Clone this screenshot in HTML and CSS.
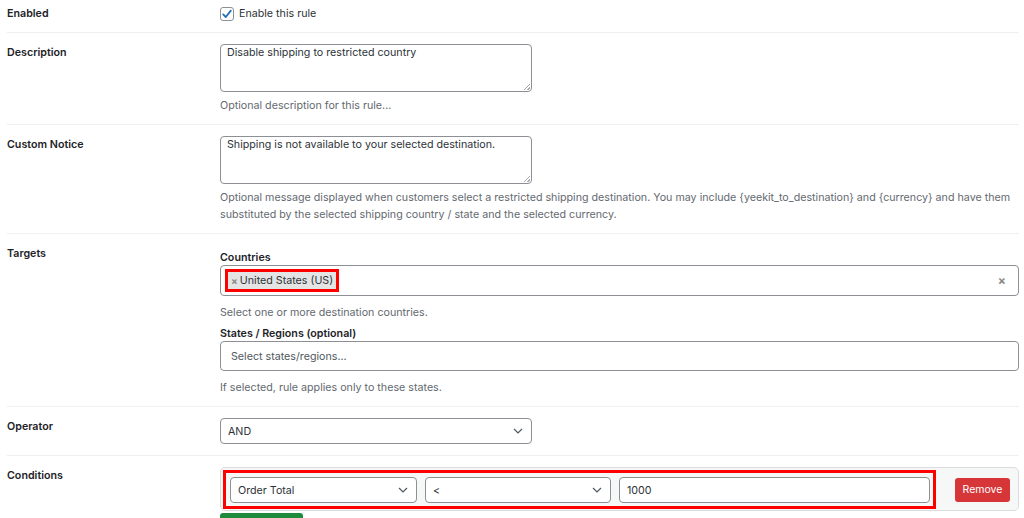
FILE: index.html
```html
<!doctype html>
<html>
	<head>
		<meta charset="utf-8">
		<link rel="stylesheet" href="styles.css">
	</head>
	<body>
		<div class="rule-form">

			<div class="rule-row rule-row-first">
				<div class="rule-label">Enabled</div>
				<div class="rule-field">
					<label class="check">
						<span class="check-box">
							<svg width="12" height="12" viewBox="0 0 12 12"><path d="M2.2 6.4 L4.8 9 L9.8 2.6" fill="none" stroke="#2271b1" stroke-width="1.8" stroke-linecap="round" stroke-linejoin="round"/></svg>
						</span>
						Enable this rule
					</label>
				</div>
			</div>

			<div class="rule-row">
				<div class="rule-label">Description</div>
				<div class="rule-field">
					<div class="textarea">Disable shipping to restricted country<span class="grip"></span></div>
					<p class="help">Optional description for this rule...</p>
				</div>
			</div>

			<div class="rule-row">
				<div class="rule-label">Custom Notice</div>
				<div class="rule-field">
					<div class="textarea">Shipping is not available to your selected destination.<span class="grip"></span></div>
					<p class="help">Optional message displayed when customers select a restricted shipping destination. You may include {yeekit_to_destination} and {currency} and have them<br>substituted by the selected shipping country / state and the selected currency.</p>
				</div>
			</div>

			<div class="rule-row">
				<div class="rule-label">Targets</div>
				<div class="rule-field rule-field-targets">
					<div class="sub-label">Countries</div>
					<div class="multi-select">
						<span class="mark mark-tag">
							<span class="tag"><span class="tag-x">×</span>United States (US)</span>
						</span>
						<span class="clear-x">×</span>
					</div>
					<p class="help help-after-select">Select one or more destination countries.</p>
					<div class="sub-label sub-label-states">States / Regions (optional)</div>
					<div class="multi-select multi-select-empty">Select states/regions...</div>
					<p class="help help-after-select">If selected, rule applies only to these states.</p>
				</div>
			</div>

			<div class="rule-row rule-row-select">
				<div class="rule-label">Operator</div>
				<div class="rule-field">
					<div class="select select-operator">AND
						<svg class="chevron" width="10" height="6" viewBox="0 0 10 6"><path d="M1 1 L5 5 L9 1" fill="none" stroke="#50575e" stroke-width="1.2"/></svg>
					</div>
				</div>
			</div>

			<div class="rule-row rule-row-last">
				<div class="rule-label">Conditions</div>
				<div class="rule-field">
					<div class="condition">
						<div class="mark mark-condition">
							<div class="select select-type">Order Total
								<svg class="chevron" width="10" height="6" viewBox="0 0 10 6"><path d="M1 1 L5 5 L9 1" fill="none" stroke="#50575e" stroke-width="1.2"/></svg>
							</div>
							<div class="select select-compare">&lt;
								<svg class="chevron" width="10" height="6" viewBox="0 0 10 6"><path d="M1 1 L5 5 L9 1" fill="none" stroke="#50575e" stroke-width="1.2"/></svg>
							</div>
							<div class="text-input">1000</div>
						</div>
						<button class="btn-remove">Remove</button>
					</div>
					<button class="btn-add">Add Condition</button>
				</div>
			</div>

		</div>
	</body>
</html>
```

FILE: styles.css
```css
body {
	margin: 0;
	background: #fff;
	font-family: "Inter", "Roboto", sans-serif;
	font-size: 10.7px;
	color: #2c3338;
	overflow: hidden;
}

.rule-form {
	padding: 0 5px 0 7px;
}

.rule-row {
	display: grid;
	grid-template-columns: 213px 1fr;
	padding: 11px 0 10px;
	border-bottom: 1px solid #f0f0f1;
}
.rule-row-first {
	padding: 5px 0 10px;
}
.rule-row-select {
	padding-bottom: 11px;
}
.rule-row-last {
	border-bottom: none;
}

.rule-label {
	font-weight: 600;
	line-height: 16px;
	padding-top: 1px;
	color: #1d2327;
}

.rule-field {
	min-width: 0;
}
.rule-field-targets {
	padding-top: 4px;
}

/* checkbox */
.check {
	display: flex;
	align-items: center;
	gap: 5px;
	line-height: 16px;
	padding-top: 1px;
	color: #2c3338;
}
.check-box {
	width: 12px;
	height: 12px;
	border: 1px solid #8c8f94;
	border-radius: 3px;
	display: flex;
	align-items: center;
	justify-content: center;
	background: #fff;
}

/* textareas */
.textarea {
	position: relative;
	width: 298px;
	height: 46px;
	border: 1px solid #8c8f94;
	border-radius: 4px;
	padding: 0 6px;
	line-height: 15px;
}
.grip {
	position: absolute;
	right: 1px;
	bottom: 1px;
	width: 6px;
	height: 6px;
	background: linear-gradient(135deg, transparent 45%, #a7aaad 45%, #a7aaad 55%, transparent 55%, transparent 75%, #a7aaad 75%, #a7aaad 85%, transparent 85%);
}

.help {
	margin: 5px 0 0;
	line-height: 17px;
	color: #646970;
	white-space: nowrap;
}
.help-after-select {
	margin-top: 8px;
}

.sub-label {
	font-weight: 600;
	line-height: 15px;
	padding-top: 1px;
	color: #1d2327;
}
.sub-label-states {
	margin-top: 4px;
}

/* select2-like boxes */
.multi-select {
	position: relative;
	height: 29px;
	border: 1px solid #8c8f94;
	border-radius: 4px;
	display: flex;
	align-items: center;
	padding: 0 4px;
}
.multi-select-empty {
	height: 28px;
	padding: 0 10px;
	color: #50575e;
}

.mark {
	border: 3px solid #f00;
}
.mark-tag {
	display: inline-flex;
}
.tag {
	display: inline-flex;
	align-items: center;
	height: 17px;
	padding: 0 3px;
	background: #e4e4e4;
	color: #2c3338;
}
.tag-x {
	color: #888;
	font-weight: 700;
	font-size: 10px;
	margin-right: 2px;
}
.clear-x {
	position: absolute;
	right: 12px;
	top: 7px;
	color: #888;
	font-weight: 700;
	font-size: 12px;
}

/* selects */
.select {
	position: relative;
	height: 24px;
	border: 1px solid #8c8f94;
	border-radius: 4px;
	padding: 0 7px;
	display: flex;
	align-items: center;
	background: #fff;
	color: #2c3338;
}
.chevron {
	position: absolute;
	right: 8px;
	top: 9px;
}
.select-operator {
	width: 296px;
}

/* conditions */
.condition {
	display: flex;
	align-items: center;
	gap: 19px;
	padding: 2px 8px 1px 2px;
	background: #f6f7f7;
	border: 1px solid #dcdcde;
	border-radius: 5px;
}
.mark-condition {
	flex: 1;
	display: flex;
	gap: 8px;
	padding: 4px 3px 3px 4px;
}
.select-type {
	width: 171px;
}
.select-compare {
	width: 170px;
}
.text-input {
	flex: 1;
	height: 24px;
	border: 1px solid #8c8f94;
	border-radius: 4px;
	padding: 0 7px;
	display: flex;
	align-items: center;
	background: #fff;
}

.btn-remove {
	width: 55px;
	height: 24px;
	border: none;
	border-radius: 3px;
	background: #d63638;
	color: #fff;
	font-family: inherit;
	font-size: 10.5px;
	padding: 0;
}
.btn-add {
	margin-top: 2px;
	width: 83px;
	height: 50px;
	border: none;
	border-radius: 3px;
	background: #1e8a3c;
	color: #fff;
	font-family: inherit;
	font-size: 10.5px;
	padding: 22px 0 0;
	display: block;
}
```
